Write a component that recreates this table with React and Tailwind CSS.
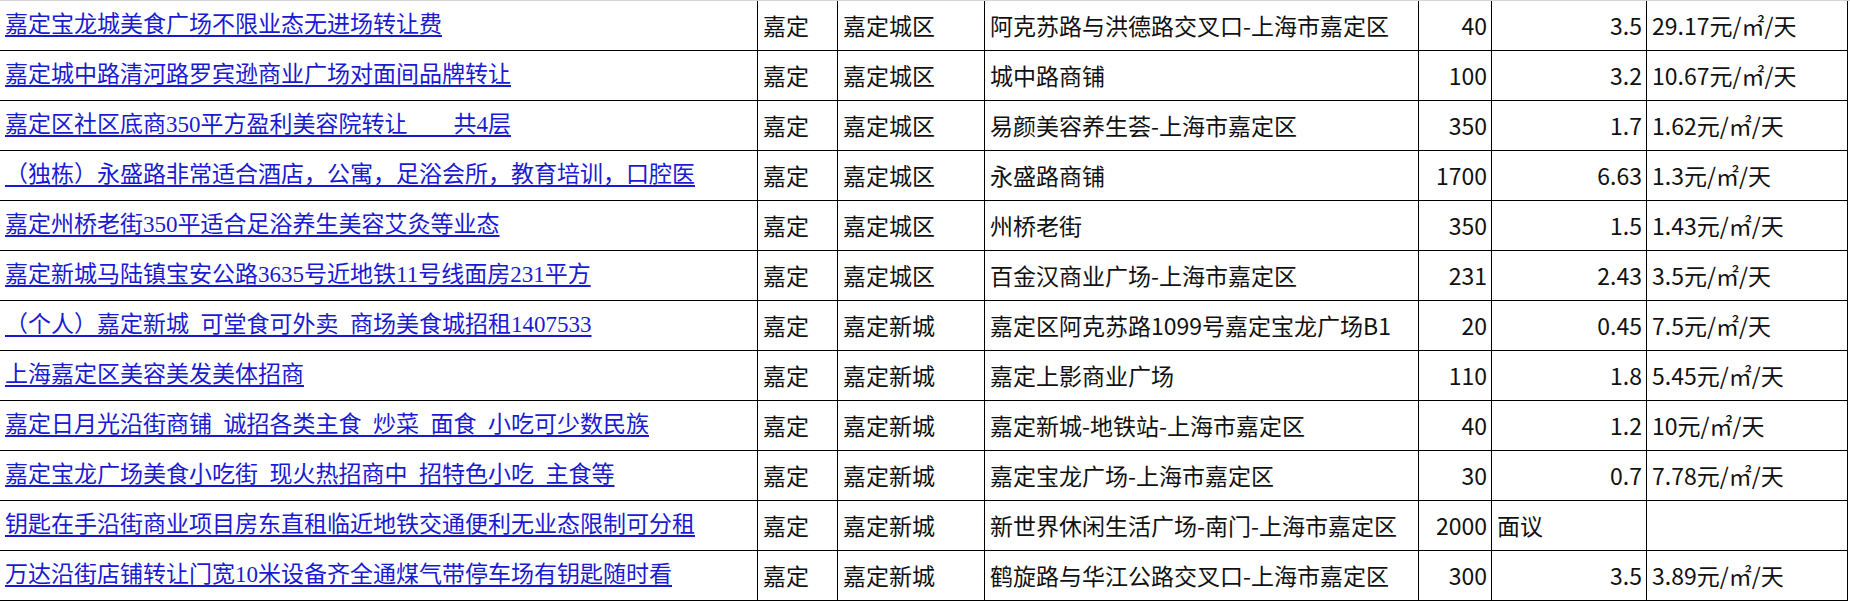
import React from "react";

const rows = [
  ["嘉定宝龙城美食广场不限业态无进场转让费", "嘉定", "嘉定城区", "阿克苏路与洪德路交叉口-上海市嘉定区", "40", "3.5", "29.17元/㎡/天"],
  ["嘉定城中路清河路罗宾逊商业广场对面间品牌转让", "嘉定", "嘉定城区", "城中路商铺", "100", "3.2", "10.67元/㎡/天"],
  ["嘉定区社区底商350平方盈利美容院转让\u3000\u3000共4层", "嘉定", "嘉定城区", "易颜美容养生荟-上海市嘉定区", "350", "1.7", "1.62元/㎡/天"],
  ["（独栋）永盛路非常适合酒店，公寓，足浴会所，教育培训，口腔医", "嘉定", "嘉定城区", "永盛路商铺", "1700", "6.63", "1.3元/㎡/天"],
  ["嘉定州桥老街350平适合足浴养生美容艾灸等业态", "嘉定", "嘉定城区", "州桥老街", "350", "1.5", "1.43元/㎡/天"],
  ["嘉定新城马陆镇宝安公路3635号近地铁11号线面房231平方", "嘉定", "嘉定城区", "百金汉商业广场-上海市嘉定区", "231", "2.43", "3.5元/㎡/天"],
  ["（个人）嘉定新城\u2002可堂食可外卖\u2002商场美食城招租1407533", "嘉定", "嘉定新城", "嘉定区阿克苏路1099号嘉定宝龙广场B1", "20", "0.45", "7.5元/㎡/天"],
  ["上海嘉定区美容美发美体招商", "嘉定", "嘉定新城", "嘉定上影商业广场", "110", "1.8", "5.45元/㎡/天"],
  ["嘉定日月光沿街商铺\u2002诚招各类主食\u2002炒菜\u2002面食\u2002小吃可少数民族", "嘉定", "嘉定新城", "嘉定新城-地铁站-上海市嘉定区", "40", "1.2", "10元/㎡/天"],
  ["嘉定宝龙广场美食小吃街\u2002现火热招商中\u2002招特色小吃\u2002主食等", "嘉定", "嘉定新城", "嘉定宝龙广场-上海市嘉定区", "30", "0.7", "7.78元/㎡/天"],
  ["钥匙在手沿街商业项目房东直租临近地铁交通便利无业态限制可分租", "嘉定", "嘉定新城", "新世界休闲生活广场-南门-上海市嘉定区", "2000", "面议", ""],
  ["万达沿街店铺转让门宽10米设备齐全通煤气带停车场有钥匙随时看", "嘉定", "嘉定新城", "鹤旋路与华江公路交叉口-上海市嘉定区", "300", "3.5", "3.89元/㎡/天"],
];

export default function App() {
  return (
    <div className="w-[1850px] h-[601px] bg-white border-t border-[#d4d4d4] overflow-hidden">
      {rows.map((r, i) => {
        const isText = r[5] === "面议";
        return (
          <div
            key={i}
            className="w-[1848px] h-[50px] grid grid-cols-[757px_80px_147px_434px_73px_155px_202px] border-b border-black text-[23px] text-[#111] font-['Noto_Sans_CJK_SC',sans-serif]"
          >
            <div className="flex items-center pl-[5px] overflow-hidden whitespace-nowrap">
              <a
                href="#"
                className="text-[#1a1ad2] underline underline-offset-[3px] font-['Liberation_Serif','Noto_Sans_CJK_SC',serif]"
              >
                {r[0]}
              </a>
            </div>
            <div className="flex items-center pl-[5px] border-l border-black whitespace-nowrap overflow-hidden">{r[1]}</div>
            <div className="flex items-center pl-[5px] border-l border-black whitespace-nowrap overflow-hidden">{r[2]}</div>
            <div className="flex items-center pl-[5px] border-l border-black whitespace-nowrap overflow-hidden">{r[3]}</div>
            <div className="flex items-center justify-end pr-[4px] border-l border-black whitespace-nowrap overflow-hidden">{r[4]}</div>
            <div
              className={
                isText
                  ? "flex items-center pl-[5px] border-l border-black whitespace-nowrap overflow-hidden"
                  : "flex items-center justify-end pr-[4px] border-l border-black whitespace-nowrap overflow-hidden"
              }
            >
              {r[5]}
            </div>
            <div className="flex items-center pl-[5px] border-l border-r border-black whitespace-nowrap overflow-hidden">{r[6]}</div>
          </div>
        );
      })}
    </div>
  );
}
